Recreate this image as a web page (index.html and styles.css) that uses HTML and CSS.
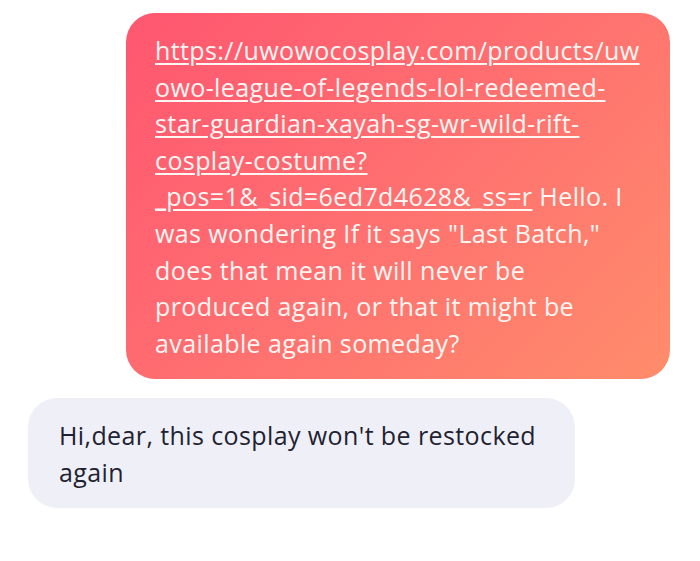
FILE: index.html
```html
<!DOCTYPE html>
<html>
<head>
<meta charset="utf-8">
<link rel="stylesheet" href="styles.css">
</head>
<body>
<div class="chat">
  <div class="row row-out">
    <div class="bubble bubble-out"><a class="link" href="#">https://uwowocosplay.com/products/uw<br>owo-league-of-legends-lol-redeemed-<br>star-guardian-xayah-sg-wr-wild-rift-<br>cosplay-costume?<br>_pos=1&amp;_sid=6ed7d4628&amp;_ss=r</a> Hello. I<br>was wondering If it says "Last Batch,"<br>does that mean it will never be<br>produced again, or that it might be<br>available again someday?</div>
  </div>
  <div class="row row-in">
    <div class="bubble bubble-in">Hi,dear, this cosplay won't be restocked<br>again</div>
  </div>
</div>
</body>
</html>
```
FILE: styles.css
```css
html, body {
  margin: 0;
  padding: 0;
  background: #ffffff;
}
.chat {
  display: flex;
  flex-direction: column;
  gap: 19px;
  padding: 13px 30px 0 28px;
  font-family: "Open Sans", "Noto Sans", sans-serif;
  font-size: 25px;
  letter-spacing: 0.4px;
  line-height: 36.6px;
}
.row {
  display: flex;
}
.row-out {
  justify-content: flex-end;
}
.row-in {
  justify-content: flex-start;
}
.bubble {
  border-radius: 29px;
  box-sizing: border-box;
  white-space: nowrap;
}
.bubble-out {
  width: 544px;
  padding: 19px 10px 18px 29px;
  color: #fff6f3;
  background: linear-gradient(135deg, #ff5670 0%, #ff7070 50%, #ff8d6b 100%);
}
.bubble-in {
  width: 547px;
  padding: 19px 10px 17px 31px;
  color: #1f2232;
  background: #eff0f7;
}
.link {
  color: #fff6f3;
  text-decoration: underline;
  text-decoration-thickness: 1.5px;
  text-underline-offset: 3px;
}
```
